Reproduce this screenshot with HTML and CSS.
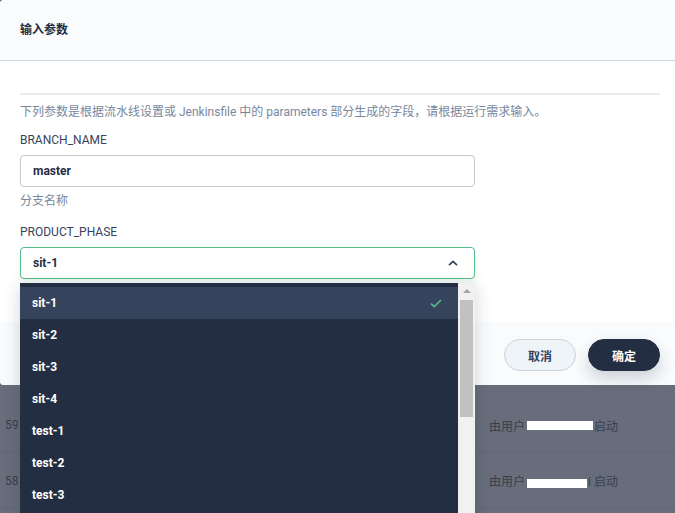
FILE: index.html
```html
<!DOCTYPE html>
<html lang="zh">
<head>
<meta charset="utf-8">
<title>输入参数</title>
<link rel="stylesheet" href="styles.css">
</head>
<body>
<div class="page">
  <div class="modal">
    <div class="modal-header"><h3 class="title">输入参数</h3></div>
    <div class="modal-body">
      <div class="divider"></div>
      <p class="desc">下列参数是根据流水线设置或 Jenkinsfile 中的 parameters 部分生成的字段，请根据运行需求输入。</p>
      <div class="field">
        <div class="label">BRANCH_NAME</div>
        <div class="input">master</div>
        <div class="hint">分支名称</div>
      </div>
      <div class="field field-select">
        <div class="label">PRODUCT_PHASE</div>
        <div class="select-wrap">
          <div class="select">
            <span>sit-1</span>
            <svg class="chevron" width="10" height="6" viewBox="0 0 10 6"><path d="M1 5.2 5 1.4 9 5.2" fill="none" stroke="#36435c" stroke-width="1.8"/></svg>
          </div>
          <div class="dropdown">
            <div class="options">
              <div class="option selected"><span>sit-1</span>
                <svg class="check" width="12" height="9" viewBox="0 0 12 9"><path d="M1 4.6 4.2 7.6 11 1" fill="none" stroke="#55bc8a" stroke-width="1.6"/></svg>
              </div>
              <div class="option">sit-2</div>
              <div class="option">sit-3</div>
              <div class="option">sit-4</div>
              <div class="option">test-1</div>
              <div class="option">test-2</div>
              <div class="option">test-3</div>
            </div>
            <div class="scrollbar">
              <div class="arrow-up"></div>
              <div class="thumb"></div>
              <div class="track-rest"></div>
              <div class="arrow-down"></div>
            </div>
          </div>
        </div>
      </div>
    </div>
    <div class="modal-footer">
      <button class="btn btn-cancel">取消</button>
      <button class="btn btn-ok">确定</button>
    </div>
  </div>
  <div class="rows">
    <div class="row">
      <div class="cell-id">59</div>
      <div class="cell-info">由用户 <span class="redact r1"></span><span class="tail">启动</span></div>
    </div>
    <div class="row">
      <div class="cell-id">58</div>
      <div class="cell-info">由用户 <span class="redact r2"></span><span class="tail">i 启动</span></div>
    </div>
  </div>
</div>
</body>
</html>
```
FILE: styles.css
```css
* { box-sizing: border-box; }
html, body { margin: 0; padding: 0; }
body {
  width: 675px;
  height: 513px;
  overflow: hidden;
  background: #676d7b;
  font-family: Roboto, "Noto Sans CJK SC", sans-serif;
  font-size: 12px;
  color: #242e42;
}
.page { width: 675px; height: 513px; overflow: hidden; }

.modal {
  width: 680px;
  height: 385px;
  background: #fff;
  border-radius: 4px;
  display: flex;
  flex-direction: column;
  overflow: visible;
}
.modal-header {
  height: 61px;
  background: #f9fbfd;
  border-bottom: 1px solid #d1d8df;
  border-radius: 4px 4px 0 0;
  padding: 0 20px;
  display: flex;
  align-items: center;
}
.title {
  margin: 0;
  font-size: 12px;
  font-weight: 700;
  color: #242e42;
  line-height: 20px;
}
.modal-body {
  padding: 32px 20px 0 20px;
  height: 261px;
  background: #fff;
}
.divider {
  height: 2px;
  background: #e6ebf0;
}
.desc {
  margin: 7px 0 0 0;
  line-height: 20px;
  color: #79879c;
  font-size: 12px;
}
.label {
  line-height: 20px;
  color: #36435c;
  font-size: 12px;
}
.field { margin-top: 8px; width: 455px; }
.field-select { margin-top: 11px; }
.input {
  margin-top: 5px;
  height: 32px;
  border: 1px solid #c1c9d1;
  border-radius: 4px;
  padding: 0 12px;
  display: flex;
  align-items: center;
  font-weight: 700;
  color: #242e42;
}
.hint {
  margin-top: 4px;
  line-height: 20px;
  color: #79879c;
}
.select-wrap { position: relative; margin-top: 5px; }
.select {
  height: 32px;
  border: 1px solid #55bc8a;
  border-radius: 4px;
  padding: 0 16px 0 12px;
  display: flex;
  align-items: center;
  justify-content: space-between;
  font-weight: 700;
  color: #242e42;
  box-shadow: 0 4px 8px 0 rgba(85, 188, 138, 0.12);
  background: #fff;
}
.chevron { display: block; }

.dropdown {
  position: absolute;
  left: 0;
  top: 36px;
  width: 455px;
  height: 240px;
  display: flex;
  background: #242e42;
  z-index: 5;
  box-shadow: 0 4px 16px rgba(36, 46, 66, 0.2);
}
.options {
  flex: 1;
  padding-top: 4px;
  overflow: hidden;
  background: #242e42;
}
.option {
  height: 32px;
  padding: 0 16px 0 12px;
  display: flex;
  align-items: center;
  justify-content: space-between;
  color: #fff;
  font-weight: 700;
  font-size: 12px;
}
.option.selected { background: #36435c; }
.check { display: block; }

.scrollbar {
  width: 17px;
  background: #f1f1f1;
  display: flex;
  flex-direction: column;
  align-items: center;
}
.arrow-up {
  margin-top: 6px;
  width: 0; height: 0;
  border-left: 4px solid transparent;
  border-right: 4px solid transparent;
  border-bottom: 4px solid #a3a3a3;
}
.thumb {
  margin-top: 7px;
  width: 13px;
  height: 117px;
  background: #c1c1c1;
}
.track-rest { flex: 1; }
.arrow-down {
  margin-bottom: 6px;
  width: 0; height: 0;
  border-left: 4px solid transparent;
  border-right: 4px solid transparent;
  border-top: 4px solid #505050;
}

.modal-footer {
  flex: 1;
  background: #f9fbfd;
  border-radius: 0 0 4px 4px;
  padding: 17px 20px 0 20px;
  display: flex;
  justify-content: flex-end;
  align-items: flex-start;
  gap: 12px;
}
.btn {
  width: 72px;
  height: 32px;
  border-radius: 16px;
  font-family: Roboto, "Noto Sans CJK SC", sans-serif;
  font-size: 12px;
  font-weight: 700;
  cursor: pointer;
}
.btn-cancel {
  background: #eff4f9;
  border: 1px solid #ccd3db;
  color: #36435c;
}
.btn-ok {
  background: #242e42;
  border: 1px solid #242e42;
  color: #fff;
  box-shadow: 0 8px 16px rgba(36, 46, 66, 0.2);
}

.rows { margin-top: 12px; }
.row {
  height: 56px;
  border-bottom: 1px solid #616775;
  display: flex;
  align-items: center;
  padding-top: 1px;
}
.row + .row { height: 55px; }
.cell-id {
  width: 477px;
  padding-left: 5px;
  color: #373f4e;
  font-size: 12px;
}
.cell-info {
  flex: 1;
  padding-left: 11px;
  color: #373f4e;
  font-size: 12px;
  display: flex;
  align-items: center;
  height: 100%;
  border-left: 1px solid #636977;
}
.redact {
  display: inline-block;
  background: #fff;
  height: 9px;
  margin-left: 2px;
}
.r1 { width: 66px; }
.r2 { width: 60px; margin-top: 6px; }
.tail { margin-left: 1px; }
```
